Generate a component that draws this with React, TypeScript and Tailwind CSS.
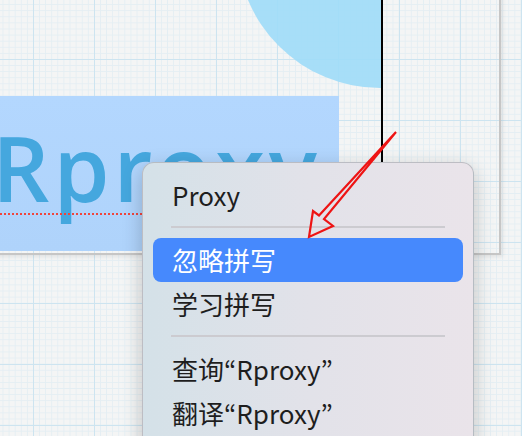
import React from "react";

type Item = { label: React.ReactNode; active?: boolean };

const Q = ({ children }: { children: React.ReactNode }) => (
  <span className="font-['Noto_Sans_CJK_JP','Noto_Sans',sans-serif]">{children}</span>
);

const MenuItem = ({ label, active }: Item) => (
  <div
    className={
      active
        ? "h-[44px] flex items-center pl-[19px] leading-none rounded-[8px] bg-[#4689fd] text-white"
        : "h-[44px] flex items-center pl-[19px] leading-none"
    }
  >
    <span>{label}</span>
  </div>
);

const Separator = () => <div className="mx-[18px] mt-[9px] mb-[10px] h-[2px] bg-[#cccbd0]" />;

export default function App() {
  return (
    <div className="relative w-[522px] h-[436px] overflow-hidden bg-[#f4f5f5] [background-image:linear-gradient(to_right,#cde4f0_1px,transparent_1px),linear-gradient(to_bottom,#cde4f0_1px,transparent_1px),linear-gradient(to_right,#e4eef3_1px,transparent_1px),linear-gradient(to_bottom,#e4eef3_1px,transparent_1px)] [background-size:61px_61px,61px_61px,6.1px_6.1px,6.1px_6.1px] [background-position:33px_59px]">
      {/* artboard frame */}
      <div className="absolute left-[-10px] top-[-10px] w-[511px] h-[265px] border-2 border-[#c6c6c6] shadow-[2px_2px_4px_rgba(0,0,0,0.08)]" />

      {/* clipped group with circle */}
      <div className="absolute left-0 top-0 w-[382px] h-[250px] overflow-hidden">
        <div className="absolute left-[237px] top-[-198px] w-[286px] h-[286px] rounded-full bg-[#9edcf8]/90" />
      </div>

      {/* blue text box */}
      <div className="absolute left-0 top-[96px] w-[339px] h-[155px] overflow-hidden bg-linear-to-b from-[#b3d7fe] to-[#afd3fb]">
        <div className="ml-[-8px] pt-[26px] whitespace-nowrap text-[90px] leading-none tracking-[4px] font-semibold text-[#45a7de] font-['Open_Sans',sans-serif]">
          Rproxy
        </div>
      </div>

      {/* spelling underline */}
      <div className="absolute left-0 top-[213px] w-[150px] border-b-2 border-dotted border-[#f0443c]" />

      {/* black frame edge */}
      <div className="absolute left-[381px] top-0 w-[2px] h-[250px] bg-black" />

      {/* context menu */}
      <div className="absolute left-[142px] top-[162px] w-[332px] h-[300px] flex flex-col rounded-[12px] border border-[#a9adb2]/70 bg-linear-to-r from-[#d4e1e8] via-[#e2e2e9] to-[#eae4ea] shadow-[0_6px_20px_rgba(0,0,0,0.22)] pt-[10px] px-[10px] font-['Noto_Sans_CJK_SC','Noto_Sans',sans-serif] text-[26px] text-[#1e1e1e]">
        <MenuItem label="Proxy" />
        <Separator />
        <MenuItem label="忽略拼写" active />
        <MenuItem label="学习拼写" />
        <Separator />
        <MenuItem
          label={
            <>
              查询<Q>“</Q>Rproxy<Q>”</Q>
            </>
          }
        />
        <MenuItem
          label={
            <>
              翻译<Q>“</Q>Rproxy<Q>”</Q>
            </>
          }
        />
      </div>

      {/* red annotation arrow */}
      <svg className="absolute left-0 top-0 pointer-events-none" width="522" height="436" viewBox="0 0 522 436">
        <polygon
          points="396,132 319,215.5 313,211 309,237 333,226 324,219"
          fill="none"
          stroke="#ee1414"
          strokeWidth="2.2"
          strokeLinejoin="miter"
        />
      </svg>
    </div>
  );
}
